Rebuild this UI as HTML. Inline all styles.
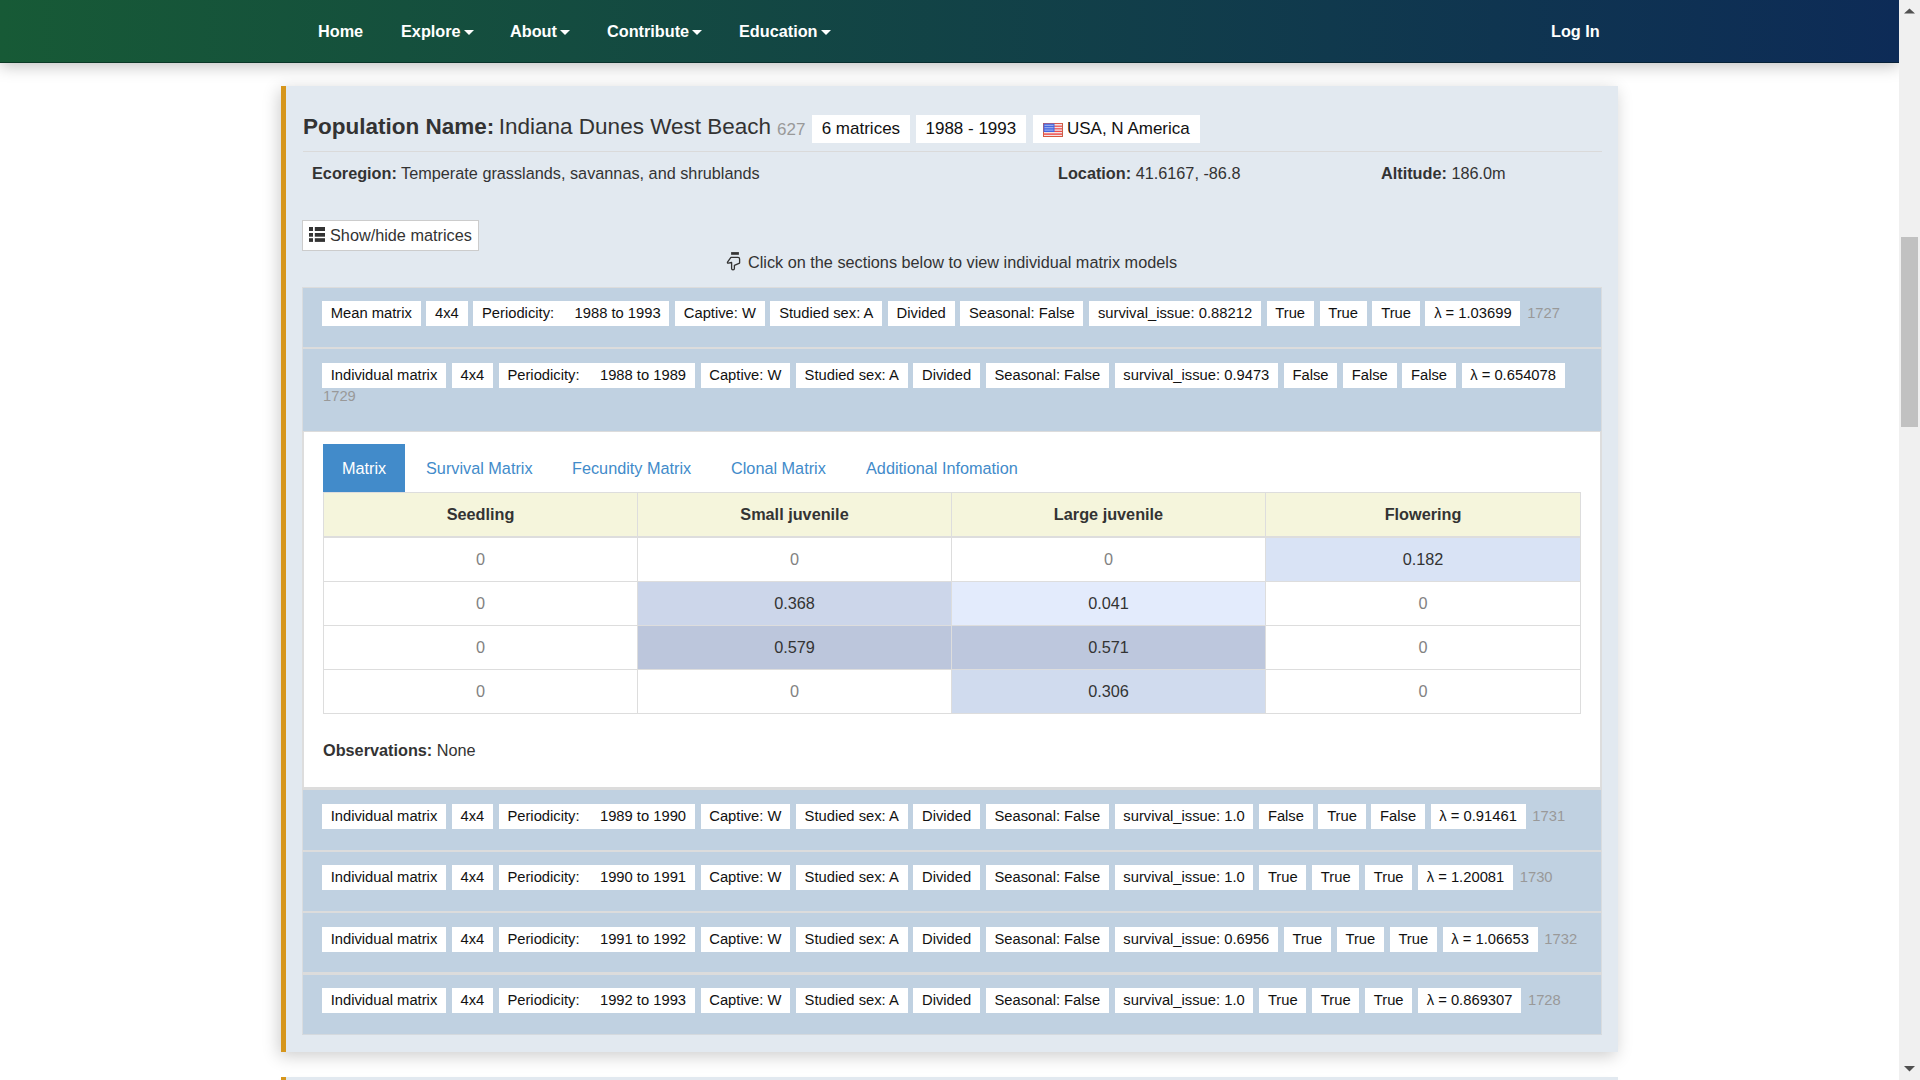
<!DOCTYPE html>
<html><head><meta charset="utf-8">
<style>
*{box-sizing:border-box;margin:0;padding:0}
html,body{width:1920px;height:1080px;overflow:hidden;background:#fff}
body{font-family:"Liberation Sans",sans-serif;font-size:16.25px;color:#333;position:relative}
.abs{position:absolute}
#nav{left:0;top:0;width:1899px;height:63px;background:linear-gradient(to right,#175a36,#0d2b57);box-shadow:0 3px 15px rgba(0,0,0,.25);z-index:5;border-bottom:1px solid rgba(0,20,20,.45)}
.nl{position:absolute;top:0;height:62px;line-height:62px;color:#fff;font-weight:bold;font-size:16.25px;white-space:nowrap}
.caret{display:inline-block;width:0;height:0;border-left:5px solid transparent;border-right:5px solid transparent;border-top:5px solid #fff;vertical-align:middle;margin-left:3px;margin-top:-1px}
#sb{left:1899px;top:0;width:21px;height:1080px;background:#f0f0f0;z-index:10}
#thumb{left:1901px;top:237px;width:17px;height:190px;background:#c1c1c1;z-index:11}
#card{left:281px;top:86px;width:1337px;height:966px;background:#e2e9f0;border-left:5px solid #d6961c;box-shadow:-2px 4px 16px rgba(0,0,0,.2)}
#card2{left:281px;top:1077px;width:1337px;height:40px;background:#e2e9f0;border-left:5px solid #d6961c;box-shadow:0 6px 12px -3px rgba(0,0,0,.2)}
.row{position:absolute;left:302px;width:1300px;background:#c0d1e1;border-left:1px solid #d9dcdf;border-right:1px solid #d9dcdf}
.sep{position:absolute;left:302px;width:1300px;background:#dcdcdc}
.labs{position:absolute;left:322px;display:flex;flex-wrap:nowrap;gap:5.8px;font-size:14.76px;white-space:nowrap}
.lbl{display:block;background:#fff;color:#111;height:25px;line-height:25px;padding:0 8.7px}
.lbl i{font-style:normal;display:inline-block;width:20.4px}
.id{color:#999;line-height:25px;margin-left:1px}
.tl{display:inline-block;background:#fff;color:#111;font-size:17px;height:28px;line-height:28px;padding:0 9.7px;vertical-align:top}
table{border-collapse:collapse;position:absolute;left:323px;top:492px;width:1258px;font-size:16.25px;table-layout:fixed}
th{background:#f5f5dc;height:44px;font-weight:bold;color:#333;border:1px solid #ddd;border-bottom:2px solid #ddd;padding:0}
td{height:44px;text-align:center;border:1px solid #ddd;color:#333;padding:0}
td.z{color:#828282}
.tab{position:absolute;top:444px;height:48px;line-height:48px;color:#428bca;font-size:16.25px;white-space:nowrap}
</style></head><body>
<div id="nav" class="abs">
 <div class="nl" style="left:318px">Home</div>
 <div class="nl" style="left:401px">Explore<span class="caret"></span></div>
 <div class="nl" style="left:510px">About<span class="caret"></span></div>
 <div class="nl" style="left:607px">Contribute<span class="caret"></span></div>
 <div class="nl" style="left:739px">Education<span class="caret"></span></div>
 <div class="nl" style="left:1551px">Log In</div>
</div>
<div id="sb" class="abs"></div>
<div id="thumb" class="abs"></div>
<svg class="abs" style="left:1899px;top:0;z-index:11" width="21" height="1080">
 <path d="M5 13.5 L10.5 8.5 L16 13.5 Z" fill="#505050"/>
 <path d="M5 1066 L10.5 1071.5 L16 1066 Z" fill="#505050"/>
</svg>

<div id="card" class="abs"></div>
<div id="card2" class="abs"></div>

<!-- title -->
<div class="abs" style="left:303px;top:109.6px;white-space:nowrap;height:34px;line-height:34px">
 <span style="font-size:22.5px;font-weight:bold">Population Name:</span> <span style="font-size:22.5px">Indiana Dunes West Beach</span> <span style="font-size:17px;color:#999;margin-left:1.5px;position:relative;top:1px">627</span>
</div>
<div class="abs" style="left:812px;top:115px;white-space:nowrap">
 <span class="tl">6 matrices</span><span class="tl" style="margin-left:6px">1988 - 1993</span><span class="tl" style="margin-left:7px;padding-left:10px;padding-right:10.7px">
 <svg width="20" height="14" style="vertical-align:-3px;margin-right:4px" viewBox="0 0 20 14">
  <rect x="0" y="0" width="20" height="14" fill="#f2e4e4"/>
  <rect x="0" y="0" width="20" height="1" fill="#e05a48"/>
  <rect x="0" y="2.6" width="20" height="1.2" fill="#f04848"/>
  <rect x="0" y="5.2" width="20" height="1.2" fill="#f04848"/>
  <rect x="0" y="7.8" width="20" height="1.2" fill="#f04848"/>
  <rect x="0" y="10.4" width="20" height="1.4" fill="#f04848"/>
  <rect x="0" y="13" width="20" height="1" fill="#d8583e"/>
  <rect x="0" y="0" width="1" height="14" fill="#d8583e"/>
  <rect x="19" y="0" width="1" height="14" fill="#c86048"/>
  <rect x="0.5" y="0.5" width="11" height="8.5" fill="#4466e0"/>
  <rect x="1.5" y="1.8" width="9" height="1" fill="#a8b8f0"/>
  <rect x="1.5" y="4.2" width="9" height="1" fill="#a8b8f0"/>
  <rect x="1.5" y="6.6" width="9" height="1" fill="#a8b8f0"/>
 </svg>USA, N America</span>
</div>
<div class="abs" style="left:303px;top:151px;width:1299px;height:1px;background:#dadada"></div>

<div class="abs" style="left:312px;top:160px;line-height:26px"><b>Ecoregion:</b> Temperate grasslands, savannas, and shrublands</div>
<div class="abs" style="left:1058px;top:160px;line-height:26px"><b>Location:</b> 41.6167, -86.8</div>
<div class="abs" style="left:1381px;top:160px;line-height:26px"><b>Altitude:</b> 186.0m</div>

<div class="abs" style="left:302px;top:220px;width:177px;height:31px;background:#fff;border:1px solid #ccc;line-height:29px;padding-left:27px;white-space:nowrap">Show/hide matrices</div>
<svg class="abs" style="left:309px;top:227px" width="17" height="16" viewBox="0 0 17 16">
 <rect x="0" y="0" width="4" height="4" fill="#333"/><rect x="5.8" y="0" width="10.2" height="4" fill="#333"/>
 <rect x="0" y="6" width="4" height="3.7" fill="#333"/><rect x="5.8" y="6" width="10.2" height="3.7" fill="#333"/>
 <rect x="0" y="11.2" width="4" height="3.7" fill="#333"/><rect x="5.8" y="11.2" width="10.2" height="3.7" fill="#333"/>
</svg>

<svg class="abs" style="left:726px;top:251px" width="16" height="20" viewBox="0 0 16 20">
 <rect x="5.1" y="1.1" width="7.8" height="2.7" fill="#333"/>
 <path d="M4.9 6.4 H12 Q13.6 6.4 13.6 8 V12.1 L8.4 14.3 V17.5 Q8.4 18.8 7 18.8 Q5.6 18.8 5.6 17.5 V11.5 L2.4 12.2 Q1.1 12.3 1.5 11.2 Z" fill="none" stroke="#333" stroke-width="1.3" stroke-linejoin="round"/>
</svg>
<div class="abs" style="left:748px;top:249px;line-height:26px;white-space:nowrap">Click on the sections below to view individual matrix models</div>

<!-- list rows -->
<div class="sep" style="top:287px;height:1px"></div>
<div class="row" style="top:288px;height:59px"></div>
<div class="labs" style="top:301px"><span class="lbl">Mean matrix</span><span class="lbl">4x4</span><span class="lbl">Periodicity:<i></i>1988 to 1993</span><span class="lbl">Captive: W</span><span class="lbl">Studied sex: A</span><span class="lbl">Divided</span><span class="lbl">Seasonal: False</span><span class="lbl">survival_issue: 0.88212</span><span class="lbl">True</span><span class="lbl">True</span><span class="lbl">True</span><span class="lbl">λ = 1.03699</span><span class="id">1727</span></div>
<div class="sep" style="top:347px;height:2px"></div>
<div class="row" style="top:349px;height:82px"></div>
<div class="labs" style="top:363px"><span class="lbl">Individual matrix</span><span class="lbl">4x4</span><span class="lbl">Periodicity:<i></i>1988 to 1989</span><span class="lbl">Captive: W</span><span class="lbl">Studied sex: A</span><span class="lbl">Divided</span><span class="lbl">Seasonal: False</span><span class="lbl">survival_issue: 0.9473</span><span class="lbl">False</span><span class="lbl">False</span><span class="lbl">False</span><span class="lbl">λ = 0.654078</span></div>
<div class="abs id" style="left:322px;top:384px;font-size:14.76px">1729</div>
<div class="sep" style="top:431px;height:1px"></div>

<div class="abs" style="left:302px;top:432px;width:1300px;height:355px;background:#fff;border-left:2px solid #ddd;border-right:2px solid #ddd"></div>
<div class="tab" style="left:323px;width:82px;background:#428bca;color:#fff;text-align:center">Matrix</div>
<div class="tab" style="left:426px">Survival Matrix</div>
<div class="tab" style="left:572px">Fecundity Matrix</div>
<div class="tab" style="left:731px">Clonal Matrix</div>
<div class="tab" style="left:866px">Additional Infomation</div>
<table>
<colgroup><col style="width:314px"><col style="width:314px"><col style="width:314px"><col></colgroup>
<tr><th>Seedling</th><th>Small juvenile</th><th>Large juvenile</th><th>Flowering</th></tr>
<tr style="height:45px"><td class="z" style="height:45px">0</td><td class="z">0</td><td class="z">0</td><td style="background:#d9e3f5">0.182</td></tr>
<tr><td class="z">0</td><td style="background:#ccd6ea">0.368</td><td style="background:#e3ebfc">0.041</td><td class="z">0</td></tr>
<tr><td class="z">0</td><td style="background:#bcc6dc">0.579</td><td style="background:#bdc7dd">0.571</td><td class="z">0</td></tr>
<tr><td class="z">0</td><td class="z">0</td><td style="background:#d0dbee">0.306</td><td class="z">0</td></tr>
</table>
<div class="abs" style="left:323px;top:737px;line-height:26px"><b>Observations:</b> None</div>

<div class="sep" style="top:787px;height:3px"></div>
<div class="row" style="top:790px;height:60px"></div>
<div class="labs" style="top:804px"><span class="lbl">Individual matrix</span><span class="lbl">4x4</span><span class="lbl">Periodicity:<i></i>1989 to 1990</span><span class="lbl">Captive: W</span><span class="lbl">Studied sex: A</span><span class="lbl">Divided</span><span class="lbl">Seasonal: False</span><span class="lbl">survival_issue: 1.0</span><span class="lbl">False</span><span class="lbl">True</span><span class="lbl">False</span><span class="lbl">λ = 0.91461</span><span class="id">1731</span></div>
<div class="sep" style="top:850px;height:2px"></div>
<div class="row" style="top:852px;height:59px"></div>
<div class="labs" style="top:865px"><span class="lbl">Individual matrix</span><span class="lbl">4x4</span><span class="lbl">Periodicity:<i></i>1990 to 1991</span><span class="lbl">Captive: W</span><span class="lbl">Studied sex: A</span><span class="lbl">Divided</span><span class="lbl">Seasonal: False</span><span class="lbl">survival_issue: 1.0</span><span class="lbl">True</span><span class="lbl">True</span><span class="lbl">True</span><span class="lbl">λ = 1.20081</span><span class="id">1730</span></div>
<div class="sep" style="top:911px;height:2px"></div>
<div class="row" style="top:913px;height:59px"></div>
<div class="labs" style="top:927px"><span class="lbl">Individual matrix</span><span class="lbl">4x4</span><span class="lbl">Periodicity:<i></i>1991 to 1992</span><span class="lbl">Captive: W</span><span class="lbl">Studied sex: A</span><span class="lbl">Divided</span><span class="lbl">Seasonal: False</span><span class="lbl">survival_issue: 0.6956</span><span class="lbl">True</span><span class="lbl">True</span><span class="lbl">True</span><span class="lbl">λ = 1.06653</span><span class="id">1732</span></div>
<div class="sep" style="top:972px;height:3px"></div>
<div class="row" style="top:975px;height:59px"></div>
<div class="sep" style="top:1034px;height:1px;background:#d4d9de"></div>
<div class="labs" style="top:988px"><span class="lbl">Individual matrix</span><span class="lbl">4x4</span><span class="lbl">Periodicity:<i></i>1992 to 1993</span><span class="lbl">Captive: W</span><span class="lbl">Studied sex: A</span><span class="lbl">Divided</span><span class="lbl">Seasonal: False</span><span class="lbl">survival_issue: 1.0</span><span class="lbl">True</span><span class="lbl">True</span><span class="lbl">True</span><span class="lbl">λ = 0.869307</span><span class="id">1728</span></div>
</body></html>
